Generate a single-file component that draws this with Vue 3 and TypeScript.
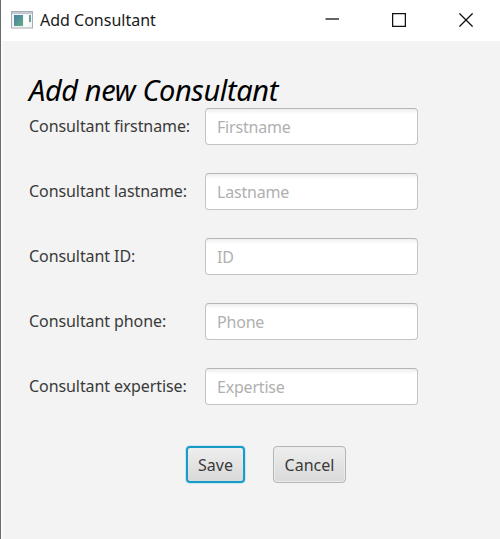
<script setup lang="ts">
import { reactive } from 'vue'

interface Field {
  key: string
  label: string
  prompt: string
}

const fields: Field[] = [
  { key: 'firstname', label: 'Consultant firstname:', prompt: 'Firstname' },
  { key: 'lastname', label: 'Consultant lastname:', prompt: 'Lastname' },
  { key: 'id', label: 'Consultant ID:', prompt: 'ID' },
  { key: 'phone', label: 'Consultant phone:', prompt: 'Phone' },
  { key: 'expertise', label: 'Consultant expertise:', prompt: 'Expertise' },
]

const values = reactive<Record<string, string>>({
  firstname: '',
  lastname: '',
  id: '',
  phone: '',
  expertise: '',
})
</script>

<template>
  <div class="window">
    <header class="titlebar">
      <svg class="app-icon" width="22" height="18" viewBox="0 0 22 18">
        <defs>
          <linearGradient id="pane" x1="0" y1="0" x2="1" y2="1">
            <stop offset="0" stop-color="#4b7fa6" />
            <stop offset="1" stop-color="#5fae84" />
          </linearGradient>
        </defs>
        <rect x="0.5" y="0.5" width="21" height="16.5" fill="#f3f5f7" stroke="#a9adb3" />
        <rect x="1" y="1" width="20" height="2" fill="#c5cad2" />
        <rect x="3" y="4" width="9" height="11" fill="url(#pane)" />
        <rect x="13" y="4" width="4" height="11" fill="#ffffff" />
        <rect x="18" y="4" width="2" height="7" fill="#6fa096" />
      </svg>
      <span class="caption">Add Consultant</span>
      <div class="controls">
        <svg width="14" height="14" viewBox="0 0 14 14"><path d="M0.5 6H14" /></svg>
        <svg width="14" height="14" viewBox="0 0 14 14"><path d="M0.6 0.6H13.4V13.4H0.6Z" /></svg>
        <svg width="14" height="14" viewBox="0 0 14 14"><path d="M0.4 0.4L13.6 13.6M13.6 0.4L0.4 13.6" /></svg>
      </div>
    </header>
    <main class="content">
      <h1 class="heading">Add new Consultant</h1>
      <form class="form" @submit.prevent>
        <div v-for="f in fields" :key="f.key" class="row">
          <label class="label" :for="f.key">{{ f.label }}</label>
          <input :id="f.key" v-model="values[f.key]" class="input" type="text" :placeholder="f.prompt" />
        </div>
        <div class="actions">
          <button class="button save" type="submit">Save</button>
          <button class="button cancel" type="button">Cancel</button>
        </div>
      </form>
    </main>
  </div>
</template>

<style>
body {
  background: #f3f3f3;
}
</style>

<style scoped>
.window {
  box-sizing: border-box;
  width: 500px;
  height: 539px;
  border-left: 1px solid #6b6b6b;
  background: #f3f3f3;
  box-shadow: inset 2px 0 0 #fafafa;
  font-family: 'Noto Sans', 'Open Sans', sans-serif;
  font-size: 16px;
  color: #3a3a3a;
  overflow: hidden;
}
.titlebar {
  display: flex;
  align-items: center;
  height: 41px;
  box-sizing: border-box;
  padding: 0 27px 2px 10px;
  background: #ffffff;
}
.app-icon {
  flex: none;
}
.caption {
  margin-left: 7px;
  color: #1a1a1a;
  white-space: nowrap;
}
.controls {
  display: flex;
  gap: 53px;
  margin-left: auto;
}
.controls svg {
  fill: none;
  stroke: #111111;
  stroke-width: 1.3;
}
.content {
  padding: 29px 0 0 28px;
}
.heading {
  margin: 0;
  height: 38px;
  line-height: 39px;
  font-size: 29px;
  font-weight: 400;
  font-style: italic;
  letter-spacing: -0.4px;
  color: #000000;
  white-space: nowrap;
}
.form {
  display: flex;
  flex-direction: column;
  gap: 28px;
}
.row {
  display: grid;
  grid-template-columns: 176px 213px;
  align-items: center;
  height: 37px;
}
.label {
  padding-bottom: 2px;
  letter-spacing: -0.08px;
  white-space: nowrap;
}
.input {
  box-sizing: border-box;
  width: 213px;
  height: 37px;
  margin: 0;
  padding: 1px 11px 0;
  border: 1px solid #c4c4c4;
  border-top-color: #b5b5b5;
  border-radius: 4px;
  outline: none;
  background: linear-gradient(#eeeeee, #ffffff 5px);
  font: inherit;
  letter-spacing: -0.2px;
  color: #333333;
}
.input::placeholder {
  color: #b0b0b0;
  opacity: 1;
}
.actions {
  display: flex;
  gap: 28px;
  padding: 13px 0 0 157px;
}
.button {
  box-sizing: border-box;
  height: 37px;
  padding: 0;
  border: 1px solid #b5b5b5;
  border-radius: 4px;
  background: linear-gradient(#eeeeee, #d9d9d9);
  box-shadow: inset 0 0 0 1px #ececec;
  font: inherit;
  color: #3a3a3a;
}
.save {
  width: 59px;
  border: 2px solid #189bc7;
  box-shadow: 0 0 0 1px #c6e6f1;
}
.cancel {
  width: 73px;
}
</style>
